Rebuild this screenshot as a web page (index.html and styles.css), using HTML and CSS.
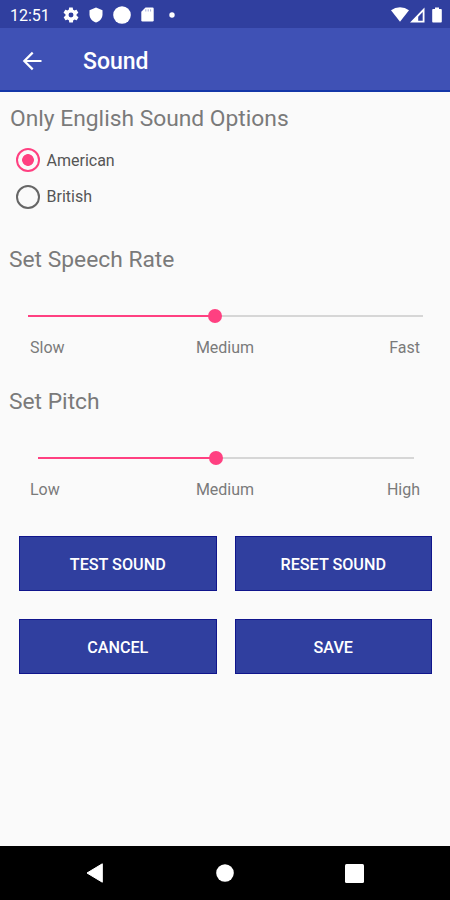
FILE: index.html
```
<!DOCTYPE html>
<html lang="en">
<head>
    <meta charset="UTF-8">
    <meta name="viewport" content="width=device-width, initial-scale=1.0">
    <title>Sound</title>
    <link rel="stylesheet" href="styles.css">
</head>
<body>
    <div class="status-bar">
        <span class="clock">12:51</span>
        <div class="status-icons">
            <svg width="18" height="18" viewBox="0 0 24 24"><path d="M19.4 13c0-.3.1-.6.1-1s0-.7-.1-1l2.1-1.6c.2-.2.3-.4.1-.7l-2-3.4c-.1-.2-.4-.3-.6-.2l-2.5 1a7 7 0 0 0-1.7-1l-.4-2.6c0-.3-.2-.5-.5-.5h-4c-.3 0-.5.2-.5.5l-.4 2.6c-.6.2-1.1.6-1.7 1l-2.5-1c-.2-.1-.5 0-.6.2l-2 3.4c-.1.3 0 .5.1.7L4.6 11a8 8 0 0 0 0 2l-2.1 1.6c-.2.2-.3.5-.1.7l2 3.4c.1.3.4.3.6.2l2.5-1c.5.4 1.1.8 1.7 1l.4 2.7c0 .2.2.4.5.4h4c.3 0 .5-.2.5-.4l.4-2.7c.6-.2 1.2-.6 1.7-1l2.5 1c.2.1.5 0 .6-.2l2-3.4c.1-.2.1-.5-.1-.7zM12 15.3a3.3 3.3 0 1 1 0-6.6 3.3 3.3 0 0 1 0 6.6z"/></svg>
            <svg class="shield" width="14" height="16" viewBox="0 0 14 16"><path d="M7 .5l6.5 2.7v4.3c0 3.7-2.7 6.9-6.5 8C3.2 14.4.5 11.2.5 7.5V3.2z"/></svg>
            <svg class="round" width="18" height="18" viewBox="0 0 18 18"><circle cx="9" cy="9" r="8.8"/></svg>
            <svg class="card" width="13" height="15" viewBox="0 0 13 15"><path d="M4.5.5H11.5Q12.7.5 12.7 1.7V13.3Q12.7 14.5 11.5 14.5H1.5Q.3 14.5.3 13.3V4.7z"/><path class="card-pins" d="M4.8 2.3V4.5M7.2 2.3V4.5M9.6 2.3V4.5"/></svg>
            <svg width="6" height="6" viewBox="0 0 6 6"><circle cx="3" cy="3" r="2.7"/></svg>
        </div>
        <div class="system-icons">
            <svg width="18" height="15" viewBox="0 0 18 15"><path d="M0 3.2Q4 .3 9 .3T18 3.2L9 14.8z"/></svg>
            <svg width="15" height="16" viewBox="0 0 15 16"><path fill-rule="evenodd" d="M14.5.5V15.5H0zM12.7 5L8.2 9.7V13.7H12.7z"/></svg>
            <svg class="battery" width="10" height="16" viewBox="0 0 10 16"><path d="M3 .5H7V2H9Q9.8 2 9.8 3V14.5Q9.8 15.5 9 15.5H1Q.2 15.5.2 14.5V3Q.2 2 1 2H3z"/></svg>
        </div>
    </div>

    <div class="app-bar">
        <button class="back-btn" aria-label="Back">
            <svg width="20" height="20" viewBox="0 0 20 20"><path d="M19.5 10H2.5M10.7 1.6L2.3 10l8.4 8.4"/></svg>
        </button>
        <h1>Sound</h1>
    </div>

    <div class="content">
        <h2 class="options-title">Only English Sound Options</h2>
        <div class="radio-group">
            <label><input type="radio" name="accent" checked>American</label>
            <label><input type="radio" name="accent">British</label>
        </div>

        <h2>Set Speech Rate</h2>
        <div class="slider rate">
            <div class="slider-fill" style="width: 47.3%"></div>
            <div class="slider-thumb"></div>
            <div class="slider-rest"></div>
        </div>
        <div class="slider-labels">
            <span>Slow</span>
            <span>Medium</span>
            <span>Fast</span>
        </div>

        <h2>Set Pitch</h2>
        <div class="slider pitch">
            <div class="slider-fill" style="width: 47.3%"></div>
            <div class="slider-thumb"></div>
            <div class="slider-rest"></div>
        </div>
        <div class="slider-labels">
            <span>Low</span>
            <span>Medium</span>
            <span>High</span>
        </div>

        <div class="actions">
            <button class="action-btn">TEST SOUND</button>
            <button class="action-btn">RESET SOUND</button>
            <button class="action-btn">CANCEL</button>
            <button class="action-btn">SAVE</button>
        </div>
    </div>

    <div class="nav-bar">
        <svg width="18" height="20" viewBox="0 0 18 20"><path d="M16.3.8V19.2L1 10z" stroke="#fff" stroke-linejoin="round"/></svg>
        <svg width="18" height="18" viewBox="0 0 18 18"><circle cx="9" cy="9" r="8.8"/></svg>
        <svg width="19" height="19" viewBox="0 0 19 19"><rect width="19" height="19" rx="1.5"/></svg>
    </div>
</body>
</html>
```
FILE: styles.css
```
:root {
    --bg: #fafafa;
    --primary: #3f51b5;
    --primary-dark: #303f9f;
    --accent: #ff4081;
    --text: #7a7a7a;
    --track: #d6d6d6;
}

* {
    box-sizing: border-box;
}

body {
    margin: 0;
    height: 100vh;
    display: flex;
    flex-direction: column;
    overflow: hidden;
    font-family: Roboto, sans-serif;
    background: var(--bg);
    color: var(--text);
}

svg {
    display: block;
    fill: #fff;
    flex: none;
}

button {
    font-family: inherit;
    color: #fff;
    border: none;
}

h1, h2 {
    margin: 0;
}

.status-bar {
    height: 28px;
    flex: none;
    display: flex;
    align-items: center;
    padding: 1px 8px 0 10px;
    background: var(--primary-dark);
    color: #fff;
}

.clock {
    width: 52px;
    padding-top: 2px;
    font-size: 16px;
    line-height: 20px;
}

.status-icons {
    display: flex;
    align-items: center;
}

.shield {
    margin-left: 9px;
}

.round {
    margin-left: 10px;
}

.card {
    margin: 0 15px 0 10px;
}

.card-pins {
    stroke: #a5acd8;
}

.system-icons {
    display: flex;
    align-items: center;
    margin-left: auto;
}

.system-icons svg:first-child {
    margin-right: 1px;
}

.battery {
    margin-left: 7px;
}

.app-bar {
    height: 64px;
    flex: none;
    display: flex;
    align-items: center;
    padding: 3px 0 0 22px;
    background: var(--primary);
    border-bottom: 2px solid #1437a8;
    color: #fff;
}

.back-btn {
    width: 61px;
    padding: 0;
    background: none;
}

.back-btn svg {
    fill: none;
    stroke: #fff;
    stroke-width: 2.2;
}

.app-bar h1 {
    padding-top: 3px;
    font-size: 23px;
    font-weight: 500;
    line-height: 30px;
}

.content {
    flex: 1;
}

.content h2 {
    padding: 30px 0 0 9px;
    font-size: 22.8px;
    font-weight: 400;
    line-height: 28px;
}

.content .options-title {
    padding: 13px 0 0 10px;
}

.radio-group {
    padding: 9px 0 1px 16px;
}

.radio-group label {
    height: 36.5px;
    display: flex;
    align-items: center;
    gap: 6.5px;
    font-size: 16px;
    color: #555;
}

.radio-group input {
    appearance: none;
    width: 24px;
    height: 24px;
    margin: 0;
    border: 2px solid #666;
    border-radius: 50%;
}

.radio-group input:checked {
    border-color: var(--accent);
    background: radial-gradient(circle, var(--accent) 5.5px, transparent 6.2px);
}

.slider {
    height: 14px;
    display: flex;
    align-items: center;
}

.rate {
    margin: 35px 27px 0 28px;
}

.pitch {
    margin: 35px 36px 0 38px;
}

.slider-fill {
    height: 2px;
    background: var(--accent);
}

.slider-thumb {
    width: 14px;
    height: 14px;
    margin: 0 -7px;
    border-radius: 50%;
    background: var(--accent);
    z-index: 1;
}

.slider-rest {
    flex: 1;
    height: 2px;
    background: var(--track);
}

.slider-labels {
    display: grid;
    grid-template-columns: 1fr auto 1fr;
    padding: 15px 30px 0;
    font-size: 16px;
    line-height: 20px;
}

.slider-labels span:last-child {
    text-align: right;
}

.actions {
    display: grid;
    grid-template-columns: 1fr 1fr;
    gap: 28px 18px;
    padding: 36px 18px 0 19px;
}

.action-btn {
    height: 55px;
    padding: 2px 0 0;
    background: var(--primary-dark);
    border: 1px solid #10158c;
    font-size: 16.2px;
    font-weight: 500;
}

.nav-bar {
    height: 54px;
    flex: none;
    display: flex;
    align-items: center;
    justify-content: space-between;
    padding: 0 86px;
    background: #000;
}
```
